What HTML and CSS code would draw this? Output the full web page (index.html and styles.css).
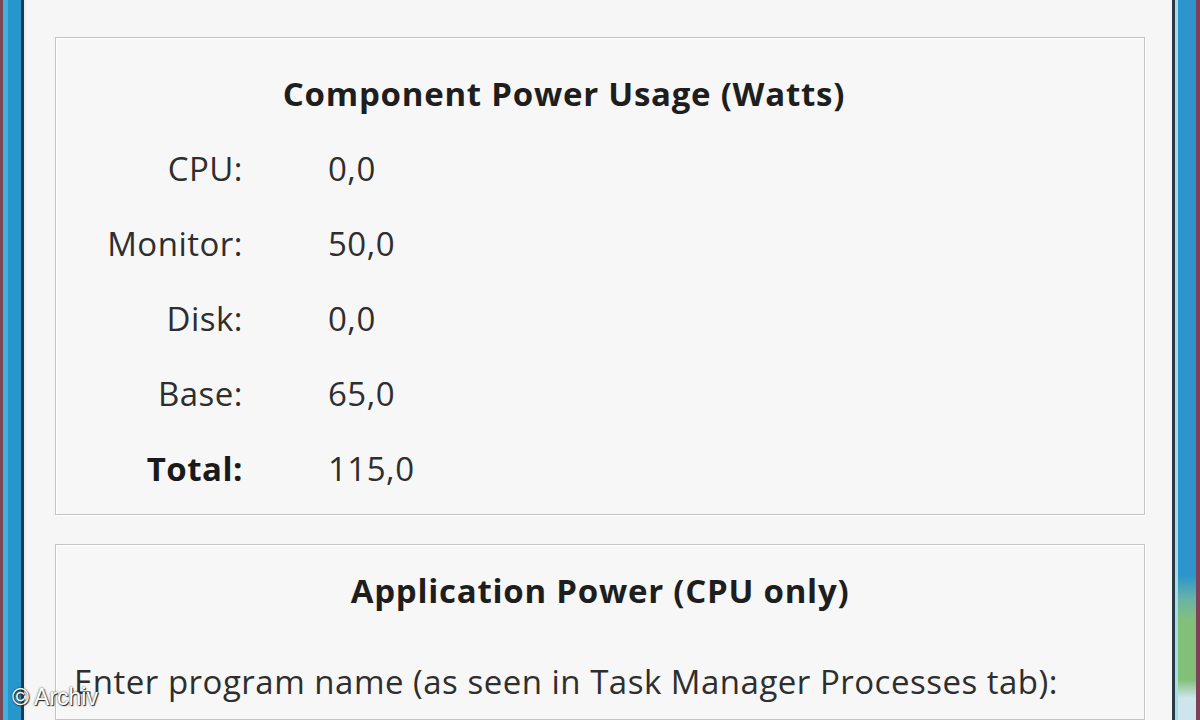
FILE: index.html
```html
<!DOCTYPE html>
<html lang="en">
<head>
<meta charset="utf-8">
<title>Power Usage</title>
<link rel="stylesheet" href="styles.css">
</head>
<body>
<div class="window">
  <div class="client">
    <section class="group group-component">
      <h2 class="group-title title-component">Component Power Usage (Watts)</h2>
      <div class="usage">
        <div class="label">CPU:</div><div class="value">0,0</div>
        <div class="label">Monitor:</div><div class="value">50,0</div>
        <div class="label">Disk:</div><div class="value">0,0</div>
        <div class="label">Base:</div><div class="value">65,0</div>
        <div class="label total">Total:</div><div class="value">115,0</div>
      </div>
    </section>
    <section class="group group-app">
      <h2 class="group-title">Application Power (CPU only)</h2>
      <p class="prompt">Enter program name (as seen in Task Manager Processes tab):</p>
    </section>
  </div>
  <div class="watermark">© Archiv</div>
</div>
</body>
</html>
```
FILE: styles.css
```css
html, body {
  margin: 0;
  padding: 0;
  width: 1200px;
  height: 720px;
  overflow: hidden;
  background: #f6f6f6;
}

.window {
  position: relative;
  box-sizing: border-box;
  width: 1200px;
  height: 720px;
  padding: 0 28px;
  font-family: "Open Sans", "Noto Sans", sans-serif;
  color: #2e2e2e;
  background:
    linear-gradient(to right,
      #7b4856 0px, #7b4856 3px,
      #3eb2dc 3px, #3eb2dc 8px,
      #2796cc 8px, #2796cc 21px,
      #1f3a4a 21px, #1f3a4a 24px,
      #e2eef4 24px, #fbfbf2 28px,
      transparent 28px, transparent 1172px,
      #2a3a44 1172px, #2a3a44 1175px,
      #a6dcec 1175px, #a6dcec 1178px,
      transparent 1178px, transparent 1196px,
      #80405a 1196px, #80405a 1200px),
    linear-gradient(to bottom,
      #2b95cc 0, #2b95cc 575px,
      #6ab4a6 600px, #82c07a 620px, #82c07a 680px,
      #cde6ee 698px, #cde6ee 720px);
}

.client {
  display: flex;
  flex-direction: column;
  gap: 29px;
  height: 100%;
  box-sizing: border-box;
  padding: 37px 27px 0 27px;
  background: #f6f6f6;
}

.group {
  border: 1px solid #c4c4c4;
  box-shadow: inset 1px 1px 0 #ffffff, 1px 1px 0 #ffffff;
  background: #f7f7f7;
}

.group-component {
  flex: none;
  height: 478px;
  box-sizing: border-box;
  padding-top: 18px;
}

.group-title {
  margin: 0;
  text-align: center;
  font-size: 33px;
  font-weight: 700;
  line-height: 75px;
  color: #1e1e1e;
  letter-spacing: 0.75px;
}

.title-component {
  padding-right: 72px;
}

.usage {
  display: grid;
  grid-template-columns: 187px auto;
  column-gap: 85px;
  grid-auto-rows: 75px;
  align-items: center;
  font-size: 33px;
  line-height: 75px;
  letter-spacing: 0.5px;
}

.label {
  text-align: right;
}

.label.total {
  font-weight: 700;
  color: #1a1a1a;
}

.group-app {
  flex: 1;
  padding: 8px 0 0 18px;
}

.group-app .group-title {
  padding-right: 18px;
}

.prompt {
  margin: 34px 0 0 0;
  font-size: 33px;
  line-height: 40px;
  letter-spacing: 0.5px;
}

.watermark {
  position: absolute;
  left: 12px;
  bottom: 9px;
  font-family: "Liberation Sans", Arial, sans-serif;
  font-size: 23px;
  color: #ffffff;
  text-shadow: 0 0 2px #333, 1px 1px 1px #222;
}
```
